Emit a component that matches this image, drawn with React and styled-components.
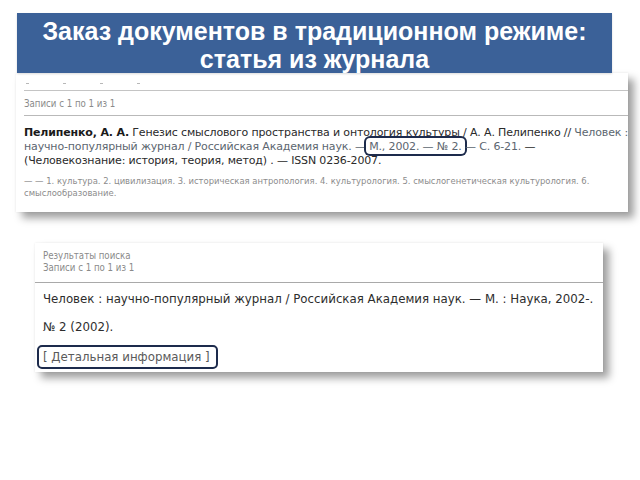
import React from "react";
import styled, { createGlobalStyle } from "styled-components";

const Global = createGlobalStyle`
  html, body { margin: 0; padding: 0; background: #ffffff; }
  body { width: 640px; height: 480px; overflow: hidden; }
`;

const Page = styled.div`
  display: flex;
  flex-direction: column;
  align-items: flex-start;
  padding-top: 13px;
  width: 640px;
  height: 480px;
  box-sizing: border-box;
`;

const TitleBar = styled.div`
  position: relative;
  z-index: 2;
  margin-left: 17px;
  width: 595px;
  height: 60px;
  box-sizing: border-box;
  background: #3b6198;
  color: #ffffff;
  font-family: "Liberation Sans", Arial, sans-serif;
  font-weight: bold;
  font-size: 25px;
  line-height: 28px;
  text-align: center;
  padding-top: 4px;
  box-shadow: 0 1px 2px rgba(0,0,0,0.15);
`;

const Panel = styled.div`
  margin-left: ${(p) => p.$left}px;
  margin-top: ${(p) => p.$top}px;
  width: ${(p) => p.$width}px;
  height: ${(p) => p.$height}px;
  box-sizing: border-box;
  background: #ffffff;
  box-shadow: 6px 6px 8px rgba(0, 0, 0, 0.38), 0 0 2px rgba(0,0,0,0.08);
  font-family: "DejaVu Sans", Verdana, sans-serif;
  overflow: hidden;
`;

const Clipped = styled.div`
  height: 17px;
  border-bottom: 1px solid #c4c4c4;
  margin: 0 0 0 8px;
  overflow: hidden;
`;

const Dots = styled.div`
  display: flex;
  gap: 34px;
  padding: 10px 0 0 2px;
  & > span {
    width: 3px;
    height: 1px;
    background: #b8b8b8;
  }
`;

const CountRow = styled.div`
  height: 24px;
  border-bottom: 1px solid #b9b9b9;
  margin-left: 8px;
  font-family: "DejaVu Sans Condensed", Tahoma, sans-serif;
  font-size: 9.6px;
  line-height: 26px;
  color: #8a8a8a;
`;

const Record = styled.div`
  padding: 10px 0 0 8px;
  font-size: 11px;
  letter-spacing: -0.15px;
  line-height: 14px;
  color: #2a2a2a;
  white-space: nowrap;
`;

const Strong = styled.b`
  color: #1a1a1a;
`;

const Muted = styled.span`
  color: #5c6670;
`;

const Highlight = styled.span`
  border-radius: 4px;
  box-shadow: 0 0 0 2px #1d2b4c;
  padding: 2px 3px 1px;
  margin: 0 -3px;
`;

const Keywords = styled.div`
  padding: 7px 0 0 8px;
  font-family: "DejaVu Sans Condensed", Tahoma, sans-serif;
  font-size: 9.4px;
  line-height: 12px;
  color: #8c8c8c;
  white-space: nowrap;
`;

const Head = styled.div`
  padding: 7px 0 0 8px;
  font-family: "DejaVu Sans Condensed", Tahoma, sans-serif;
  font-size: 9.6px;
  line-height: 12px;
  color: #8a8a8a;
  height: 40px;
  box-sizing: border-box;
  border-bottom: 1px solid #a9a9a9;
`;

const Line = styled.div`
  padding-left: 8px;
  margin-top: ${(p) => p.$gap}px;
  font-size: 11.8px;
  line-height: 14px;
  color: #2d2d2d;
  white-space: nowrap;
`;

const DetailLink = styled.div`
  margin: 11px 0 0 2px;
  display: inline-flex;
  align-items: center;
  height: 24px;
  width: 181px;
  box-sizing: border-box;
  padding-left: 4px;
  border: 2px solid #1d2b4c;
  border-radius: 5px;
  font-size: 11.8px;
  color: #5a5a5a;
  white-space: nowrap;
`;

export default function App() {
  return (
    <>
      <Global />
      <Page>
        <TitleBar>
          Заказ документов в традиционном режиме:
          <br />
          статья из журнала
        </TitleBar>
        <Panel $left={16} $top={0} $width={612} $height={139}>
          <Clipped>
            <Dots>
              <span />
              <span />
              <span />
              <span />
            </Dots>
          </Clipped>
          <CountRow>Записи с 1 по 1 из 1</CountRow>
          <Record>
            <Strong>Пелипенко, А. А.</Strong> Генезис смыслового пространства и онтология культуры / А. А. Пелипенко // <Muted>Человек :</Muted>
            <br />
            <Muted>научно-популярный журнал / Российская Академия наук. — <Highlight>М., 2002. — № 2.</Highlight> — С. 6-21.</Muted> —
            <br />
            (Человекознание: история, теория, метод) . — ISSN 0236-2007.
          </Record>
          <Keywords>
            — — 1. культура. 2. цивилизация. 3. историческая антропология. 4. культурология. 5. смыслогенетическая культурология. 6.
            <br />
            смыслообразование.
          </Keywords>
        </Panel>
        <Panel $left={35} $top={31} $width={568} $height={129}>
          <Head>
            Результаты поиска
            <br />
            Записи с 1 по 1 из 1
          </Head>
          <Line $gap={9}>
            Человек : научно-популярный журнал / Российская Академия наук. — М. : Наука, 2002-.
          </Line>
          <Line $gap={14}>№ 2 (2002).</Line>
          <DetailLink>[ Детальная информация ]</DetailLink>
        </Panel>
      </Page>
    </>
  );
}
